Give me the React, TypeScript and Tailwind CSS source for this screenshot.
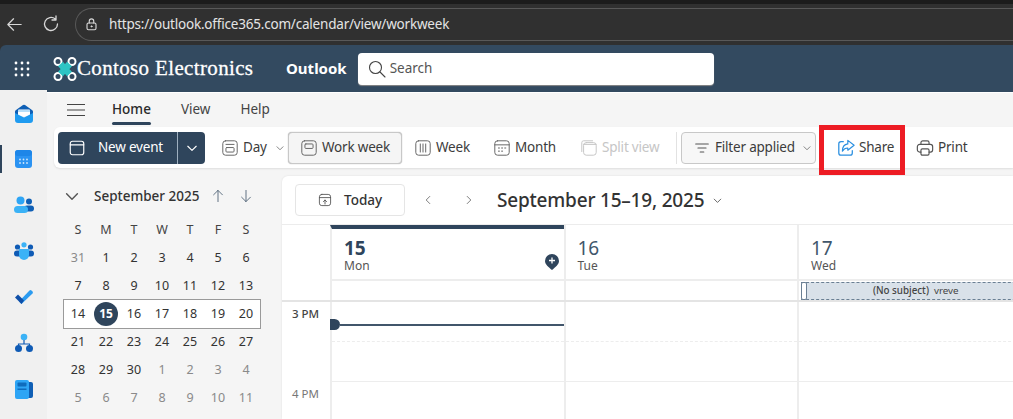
import React from "react";

const font = { fontFamily: '"Noto Sans", "Open Sans", sans-serif' };

function Ico({ children, size = 20, className = "" }: { children: React.ReactNode; size?: number; className?: string }) {
  return (
    <svg width={size} height={size} viewBox="0 0 20 20" fill="none" stroke="currentColor" strokeWidth="1.1" strokeLinecap="round" strokeLinejoin="round" className={`shrink-0 ${className}`}>
      {children}
    </svg>
  );
}

const Chevron = ({ size = 12, className = "" }: { size?: number; className?: string }) => (
  <Ico size={size} className={className}><path d="M4 7.5l6 6 6-6" strokeWidth="1.6" /></Ico>
);

function ViewBtn({ label, icon, active, muted, caret, className = "" }: { label: string; icon: React.ReactNode; active?: boolean; muted?: boolean; caret?: boolean; className?: string }) {
  return (
    <div className={`h-[32px] shrink-0 flex items-center rounded-[4px] text-[13.5px] tracking-[-0.2px] whitespace-nowrap ${active ? "bg-[#f5f5f5] border border-[#c8c8c8] shadow-[0_0_1px_#999] pl-[11px]" : ""} ${muted ? "text-[#c6c6c6]" : "text-[#3c3c3c]"} ${className}`}>
      {icon}
      <span className="ml-[4px]">{label}</span>
      {caret && <Chevron size={10} className="ml-[8px] text-[#666]" />}
    </div>
  );
}

const weeks = [
  ["31", "1", "2", "3", "4", "5", "6"],
  ["7", "8", "9", "10", "11", "12", "13"],
  ["14", "15", "16", "17", "18", "19", "20"],
  ["21", "22", "23", "24", "25", "26", "27"],
  ["28", "29", "30", "1", "2", "3", "4"],
  ["5", "6", "7", "8", "9", "10", "11"],
];

function isMuted(r: number, c: number) {
  return (r === 0 && c === 0) || (r === 4 && c >= 3) || r === 5;
}

function MiniCalendar() {
  return (
    <div className="w-[235px] shrink-0 pl-[17px] pt-[14px]">
      <div className="h-[28px] flex items-center text-[#333]">
        <Chevron size={18} className="text-[#555] ml-[-1px]" />
        <span className="ml-[13px] text-[13.5px] font-medium w-[116px] whitespace-nowrap">September 2025</span>
        <Ico size={16} className="text-[#4d6174]"><path d="M10 17V3M4.5 8.5L10 3l5.500 5.500" /></Ico>
        <Ico size={16} className="text-[#4d6174] ml-[12px]"><path d="M10 3v14M4.500 11.500L10 17l5.500-5.500" /></Ico>
      </div>
      <div className="grid grid-cols-7 w-[196px] mt-[6px] text-[#444] text-[12.500px]">
        {["S", "M", "T", "W", "T", "F", "S"].map((d, i) => (
          <div key={i} className="h-[28px] flex items-center justify-center">{d}</div>
        ))}
      </div>
      <div className="w-[196px]">
        {weeks.map((w, r) => (
          <div key={r} className={`grid grid-cols-7 h-[28px] text-[12.500px] ${r === 2 ? "bg-white outline outline-1 outline-[#9a9a9a]" : ""}`}>
            {w.map((d, c) => (
              <div key={c} className={`flex items-center justify-center ${isMuted(r, c) ? "text-[#8a8a8a]" : "text-[#333]"}`}>
                {r === 2 && c === 1 ? (
                  <span className="w-[24px] h-[24px] rounded-full bg-[#2f455c] text-white font-bold flex items-center justify-center text-[12px]">{d}</span>
                ) : d}
              </div>
            ))}
          </div>
        ))}
      </div>
    </div>
  );
}

function DayHead({ num, name, today }: { num: string; name: string; today?: boolean }) {
  return (
    <div className={`relative h-[54px] w-[233.500px] shrink-0 border-l-2 border-[#ededed] pl-[12px] ${today ? "border-t-[4px] border-t-[#2f455c] pt-[8px]" : "pt-[12px]"}`}>
      <div className={`text-[19px] leading-[23px] ${today ? "font-bold text-[#2f455c]" : "text-[#41566b]"}`}>{num}</div>
      <div className="text-[12px] leading-[12px] text-[#555]">{name}</div>
      {today && (
        <svg width="16" height="18" viewBox="0 0 16 18" className="absolute right-[4px] top-[24px]">
          <path d="M8 1a7 7 0 0 1 7 7c0 3.500-3.500 6-7 9-3.500-3-7-5.500-7-9a7 7 0 0 1 7-7z" fill="#2f455c" />
          <path d="M8 4.500v6M5 7.500h6" stroke="#fff" strokeWidth="1.300" />
        </svg>
      )}
    </div>
  );
}

function Column({ now }: { now?: boolean }) {
  return (
    <div className="relative w-[233.500px] shrink-0 border-l-2 border-[#ededed]">
      <div className="h-[40px] border-b border-dashed border-[#ededed]" />
      <div className="h-[40px] border-b border-[#ededed]" />
      <div className="h-[40px] border-b border-dashed border-[#ededed]" />
      {now && (
        <div className="absolute left-[-2px] top-[17px] right-0 flex items-center">
          <span className="w-[10px] h-[11px] rounded-r-full bg-[#2f455c]" />
          <span className="flex-1 h-[2px] bg-[#41566b]" />
        </div>
      )}
    </div>
  );
}

function RailSlot({ children }: { children: React.ReactNode }) {
  return <div className="h-[46px] w-full flex items-center justify-center">{children}</div>;
}

export default function App() {
  return (
    <div style={font} className="w-[1013px] h-[419px] overflow-hidden relative bg-[#303030] flex flex-col">
      {/* browser chrome */}
      <div className="h-[45px] shrink-0 flex flex-col">
        <div className="h-[4px] bg-[#1c1c1c]" />
        <div className="flex-1 flex items-center pl-[5px] pb-[1px]">
          <Ico size={19} className="text-[#d8d8d8]"><path d="M17 10H3M9 4l-6 6 6 6" strokeWidth="1.300" /></Ico>
          <Ico size={20} className="text-[#d8d8d8] ml-[17px]"><path d="M16.500 10a6.500 6.500 0 1 1-2.200-4.900M15 2v4h-4" strokeWidth="1.300" /></Ico>
          <div className="ml-[14px] flex-1 h-[33px] border border-[#595959] border-r-0 rounded-l-full flex items-center pl-[8px]">
            <Ico size={15} className="text-[#d8d8d8]"><rect x="4" y="8" width="12" height="9" rx="2" strokeWidth="1.500" /><path d="M7 8V5.500a3 3 0 0 1 6 0V8" strokeWidth="1.500" /><circle cx="10" cy="12.500" r="0.800" fill="currentColor" /></Ico>
            <span className="ml-[10px] text-[13.500px] text-[#e4e4e4] tracking-[-0.200px]">https://outlook.office365.com/calendar/view/workweek</span>
          </div>
        </div>
      </div>

      {/* app header */}
      <div className="h-[47px] shrink-0 bg-[#334a60] rounded-tl-[6px] flex items-center text-white">
        <svg width="16" height="16" viewBox="0 0 16 16" className="ml-[14px] shrink-0" fill="#fff">
          {[0, 1, 2].flatMap((r) => [0, 1, 2].map((c) => <circle key={`${r}${c}`} cx={2 + c * 6} cy={2 + r * 6} r="1.400" />))}
        </svg>
        <svg width="24" height="26" viewBox="0 0 24 26" className="ml-[23px] shrink-0">
          <g fill="none" stroke="#fff" strokeWidth="2">
            <circle cx="5" cy="5.500" r="3.500" /><circle cx="19" cy="5.500" r="3.500" /><circle cx="5" cy="20.500" r="3.500" /><circle cx="19" cy="20.500" r="3.500" />
          </g>
          <path d="M7.500 8l9 10M16.500 8l-9 10" stroke="#2ec4c4" strokeWidth="6.500" />
        </svg>
        <span className="text-[21px] font-medium w-[198px] tracking-[0.350px] whitespace-nowrap [-webkit-text-stroke:0.3px_#fff]" style={{ fontFamily: '"Liberation Serif", serif' }}>Contoso Electronics</span>
        <span className="ml-[11px] text-[15px] font-bold">Outlook</span>
        <div className="ml-[11px] w-[356px] h-[32px] bg-white rounded-[4px] flex items-center pl-[9px] text-[#555] shadow-[0_1px_1px_#888]">
          <Ico size={20} className="text-[#444]"><circle cx="8.500" cy="8.500" r="6" /><path d="M13 13l5 5" /></Ico>
          <span className="ml-[3px] text-[13.500px]">Search</span>
        </div>
      </div>

      {/* body */}
      <div className="flex-1 flex min-h-0 bg-[#f5f5f5] border-t border-white">
        {/* rail */}
        <div className="w-[47px] shrink-0 bg-[#f0f0f0] flex flex-col items-center relative mt-[-3px]">
          <RailSlot>
            <svg width="20" height="19" viewBox="0 0 20 19"><path d="M1 7.500C1 7 1.300 6.500 2 6l7-5a2 2 0 0 1 2 0l7 5c.7.500 1 1 1 1.500V11H1z" fill="#0f5fb5" /><rect x="4" y="5.500" width="12" height="7" rx="1" fill="#fff" /><path d="M1 9l9 4.500L19 9v7a3 3 0 0 1-3 3H4a3 3 0 0 1-3-3z" fill="#1f9bf0" /><path d="M4 7h12" stroke="#9fd4f7" strokeWidth="1.500" /></svg>
          </RailSlot>
          <RailSlot>
            <svg width="17" height="18" viewBox="0 0 17 18"><rect width="17" height="18" rx="3" fill="#2b93f2" /><rect width="17" height="6" rx="3" fill="#1e86e8" /><g fill="#cfe6fb"><circle cx="5" cy="9.500" r="0.900" /><circle cx="8.500" cy="9.500" r="0.900" /><circle cx="12" cy="9.500" r="0.900" /><circle cx="5" cy="13" r="0.900" /><circle cx="8.500" cy="13" r="0.900" /><circle cx="12" cy="13" r="0.900" /></g></svg>
          </RailSlot>
          <RailSlot>
            <svg width="20" height="18" viewBox="0 0 20 18"><circle cx="6.500" cy="4.500" r="4" fill="#2ea5f5" /><circle cx="15" cy="5.500" r="3" fill="#0f5fb5" /><rect x="10" y="9.500" width="10" height="6" rx="3" fill="#0f5fb5" /><rect y="10" width="14" height="7" rx="3.500" fill="#3bb2f6" /></svg>
          </RailSlot>
          <RailSlot>
            <svg width="20" height="18" viewBox="0 0 20 18"><circle cx="10" cy="2.800" r="2.600" fill="#3bb2f6" /><circle cx="3.500" cy="5" r="2.600" fill="#0f5bb5" /><circle cx="16.500" cy="5" r="2.600" fill="#0f5bb5" /><rect x="0" y="8.500" width="20" height="6" rx="3" fill="#0f5bb5" /><path d="M5 7h10v6a5 5 0 0 1-10 0z" fill="#3bb2f6" /></svg>
          </RailSlot>
          <RailSlot>
            <svg width="20" height="16" viewBox="0 0 20 16"><path d="M7.500 15L5 12.500 15.500 1.500a1.500 1.500 0 0 1 2 0l1 1a1.500 1.500 0 0 1 0 2z" fill="#2b9bf0" /><path d="M1 8.500L4 5.500 10 11.500l-2.500 3.500z" fill="#0f4fa8" /></svg>
          </RailSlot>
          <RailSlot>
            <svg width="18" height="20" viewBox="0 0 18 20"><circle cx="9" cy="4" r="3.300" fill="#3bb2f6" /><circle cx="3.500" cy="15.500" r="3.500" fill="#0f5bb5" /><circle cx="14.500" cy="15.500" r="3.500" fill="#0f5bb5" /><path d="M9 7v4M3.500 13v-2h11v2" stroke="#0f5bb5" fill="none" strokeWidth="1.200" /></svg>
          </RailSlot>
          <RailSlot>
            <svg width="18" height="19" viewBox="0 0 18 19"><rect x="9" y="2" width="9" height="16" rx="2" fill="#0f5fb5" /><rect width="14" height="19" rx="2" fill="#2ea5f5" /><rect x="2.500" y="2.500" width="9" height="4" rx="1" fill="#0f6cbd" /><rect x="2.500" y="8.500" width="9" height="1.500" fill="#0f6cbd" /></svg>
          </RailSlot>
          <div className="absolute left-0 top-[55px] h-[28px] w-[2px] bg-[#2f455c]" />
        </div>

        {/* main */}
        <div className="flex-1 min-w-0 flex flex-col">
          {/* tabs */}
          <div className="h-[33px] shrink-0 flex items-center pl-[20px] text-[13.500px] text-[#444]">
            <svg width="18" height="14" viewBox="0 0 18 14" className="shrink-0" stroke="#444" strokeWidth="1.100"><path d="M0 1.500h18M0 7h18M0 12.500h18" /></svg>
            <div className="relative ml-[27px] font-medium text-[#2a2a2a]">
              Home
              <span className="absolute left-0 right-0 bottom-[-5px] h-[3px] rounded-full bg-[#2f455c]" />
            </div>
            <span className="ml-[30px]">View</span>
            <span className="ml-[30px]">Help</span>
          </div>

          {/* toolbar */}
          <div className="h-[41px] shrink-0 ml-[7px] mt-[1px] bg-white rounded-l-[6px] flex items-center pl-[4px] shadow-[0_1px_2px_#ddd]">
            <div className="h-[32px] w-[147px] bg-[#2f455c] rounded-[4px] flex items-center text-white text-[13.500px] tracking-[-0.2px] shrink-0">
              <Ico size={18} className="ml-[10px] text-white"><rect x="2.500" y="2.500" width="15" height="15" rx="2.500" strokeWidth="1.300" /><path d="M2.500 6.500h15" strokeWidth="1.300" /></Ico>
              <span className="ml-[12px] w-[79px]">New event</span>
              <span className="h-full w-[1px] bg-[#9fb0c0]" />
              <Chevron size={14} className="ml-[7px] text-white" />
            </div>
            <ViewBtn label="Day" caret className="ml-[16px] w-[67px]" icon={<Ico size={18} className="text-[#666]"><rect x="2" y="2" width="16" height="16" rx="3" /><path d="M5.500 6h9M6.500 9.500h7a1 1 0 0 1 1 1v3a1 1 0 0 1-1 1h-7a1 1 0 0 1-1-1v-3a1 1 0 0 1 1-1z" /></Ico>} />
            <ViewBtn label="Work week" active className="w-[114px]" icon={<Ico size={18} className="text-[#666]"><rect x="2" y="2" width="16" height="16" rx="3" /><rect x="5.500" y="5.500" width="9" height="5" rx="1" /></Ico>} />
            <ViewBtn label="Week" className="ml-[12px] w-[79px]" icon={<Ico size={18} className="text-[#666]"><rect x="2" y="2" width="16" height="16" rx="3" /><path d="M7 5.500v9M10 5.500v9M13 5.500v9" /></Ico>} />
            <ViewBtn label="Month" className="w-[87px]" icon={<Ico size={18} className="text-[#666]"><rect x="2" y="2" width="16" height="16" rx="3" /><path d="M2 6.500h16M6 10h1.200M9.500 10h1.200M13 10h1.200M6 13.500h1.200M9.500 13.500h1.200" /></Ico>} />
            <ViewBtn label="Split view" muted className="w-[96px]" icon={<Ico size={18} className="text-[#c6c6c6]"><rect x="4" y="4" width="14" height="14" rx="3" /><path d="M2 14V4a2 2 0 0 1 2-2h10M4 6h14" /></Ico>} />
            <span className="h-[32px] w-[1px] bg-[#e2e2e2] shrink-0" />
            <div className="ml-[4px] h-[32px] w-[135px] shrink-0 bg-[#f7f7f7] border border-[#c8c8c8] rounded-[4px] flex items-center text-[13.500px] tracking-[-0.2px] text-[#3c3c3c] pl-[11px]">
              <Ico size={18} className="text-[#555]"><path d="M3 5.500h14M5.500 10h9M8 14.500h4" strokeWidth="1.200" /></Ico>
              <span className="ml-[4px] whitespace-nowrap">Filter applied</span>
              <Chevron size={10} className="ml-[7px] text-[#666]" />
            </div>
            <ViewBtn label="Share" className="ml-[21px] w-[79px]" icon={<Ico size={18} className="text-[#2b8fe0]"><path d="M7 3H4.500A2.500 2.500 0 0 0 2 5.500v10A2.500 2.500 0 0 0 4.500 18h10a2.500 2.500 0 0 0 2.500-2.500V13" strokeWidth="1.400" /><path d="M12 1.500l7 5.500-7 5.500V10c-3 0-4.500 1-6 3.500 0-5 2-7.500 6-8z" strokeWidth="1.300" /></Ico>} />
            <ViewBtn label="Print" icon={<Ico size={18} className="text-[#555]"><path d="M5.500 6V4a2 2 0 0 1 2-2h5a2 2 0 0 1 2 2v2M5.500 14.500H4A2.500 2.500 0 0 1 1.500 12V8.500A2.500 2.500 0 0 1 4 6h12a2.500 2.500 0 0 1 2.500 2.500V12a2.500 2.500 0 0 1-2.500 2.500h-1.500" strokeWidth="1.300" /><rect x="5.500" y="11" width="9" height="7" rx="1.500" strokeWidth="1.300" /></Ico>} />
          </div>

          {/* content */}
          <div className="flex-1 min-h-0 flex">
            <MiniCalendar />
            <div className="flex-1 min-w-0 mt-[8px] bg-white rounded-tl-[6px] shadow-[0_0_2px_#ddd] overflow-hidden">
              <div className="h-[49px] flex items-center pl-[13px] border-b border-[#ececec]">
                <div className="w-[110px] h-[32px] border border-[#e5e5e5] rounded-[4px] flex items-center pl-[21px] text-[13.500px] font-medium text-[#333] shrink-0">
                  <Ico size={16} className="text-[#555]"><rect x="3" y="3" width="14" height="14" rx="3" /><path d="M3 7h14M10 15v-5M8 12l2-2 2 2" /></Ico>
                  <span className="ml-[11px]">Today</span>
                </div>
                <Ico size={12} className="ml-[17px] text-[#666]"><path d="M13 4l-6 6 6 6" strokeWidth="1.400" /></Ico>
                <Ico size={12} className="ml-[29px] text-[#666]"><path d="M7 4l6 6-6 6" strokeWidth="1.400" /></Ico>
                <span className="ml-[22px] text-[19px] font-medium text-[#333] tracking-[-0.200px] whitespace-nowrap">September 15–19, 2025</span>
                <Chevron size={11} className="ml-[8px] text-[#555]" />
              </div>
              <div className="flex pl-[48px]">
                <DayHead num="15" name="Mon" today />
                <DayHead num="16" name="Tue" />
                <DayHead num="17" name="Wed" />
              </div>
              <div className="flex pl-[48px] h-[23px] border-b-[2px] border-[#e4e4e4]">
                <div className="w-[233.500px] shrink-0 border-l-2 border-t-2 border-[#ededed]" />
                <div className="w-[233.500px] shrink-0 border-l-2 border-t-2 border-[#ededed]" />
                <div className="w-[233.500px] shrink-0 border-l-2 border-t-2 border-[#ededed] pt-[1px] pl-[2px]">
                  <div className="h-[18px] flex items-center border-y border-dashed border-[#6a7f93] bg-[#d9e1e9] relative text-[9.800px] text-[#444]">
                    <span className="w-[6px] h-[18px] bg-white border border-[#6a7f93] rounded-[2px] shrink-0" />
                    <div className="flex-1 flex justify-center gap-[5px] whitespace-nowrap pr-[6px]">
                      <span className="font-medium">(No subject)</span>
                      <span>vreve</span>
                    </div>
                  </div>
                </div>
              </div>
              <div className="flex">
                <div className="w-[48px] shrink-0 text-[11.500px] text-[#555] pl-[10px] pt-[3px]">
                  <div className="h-[80px] font-medium text-[#444]">3 PM</div>
                  <div className="text-[#777]">4 PM</div>
                </div>
                <Column now />
                <Column />
                <Column />
              </div>
            </div>
          </div>
        </div>
      </div>

      {/* annotation */}
      <div className="absolute left-[819px] top-[125px] w-[86px] h-[50px] border-[5px] border-[#ed1c24]" />
    </div>
  );
}
